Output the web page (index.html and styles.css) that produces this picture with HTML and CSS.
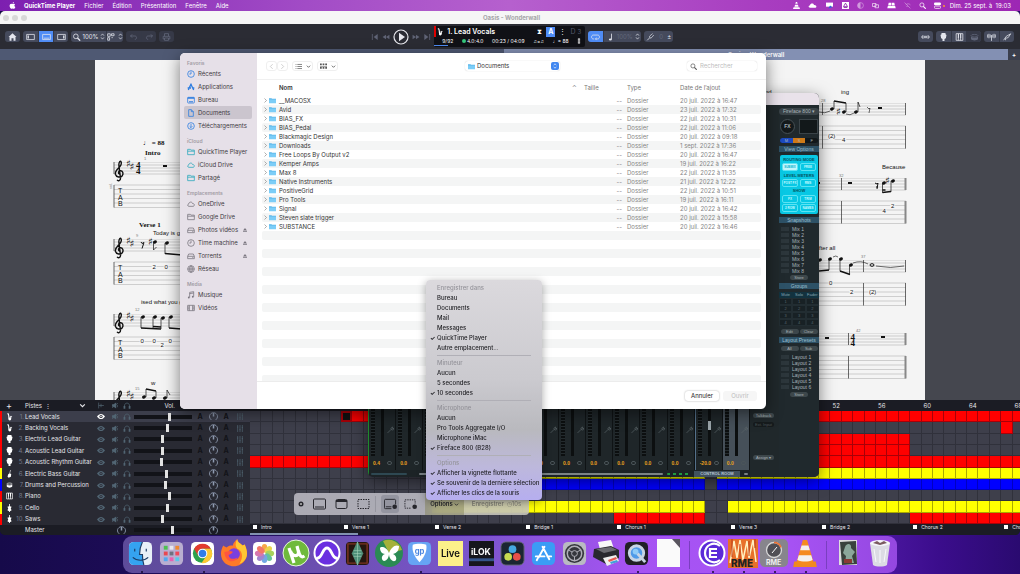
FILE: index.html
```html
<!DOCTYPE html>
<html lang="fr">
<head>
    <meta charset="UTF-8">
    <meta name="viewport" content="width=device-width, initial-scale=1.0">
    <title>Oasis - Wonderwall</title>
    <link rel="stylesheet" href="styles.css">
</head>
<body>
    <!-- Shared icons -->
    <svg class="sprite" aria-hidden="true">
        <symbol id="apple" viewBox="0 0 12 12"><path d="M8.500 0c.1 1.400-1 2.600-2.300 2.600C6 1.300 7.200.2 8.500 0zM6.200 3.300c.5 0 1.200-.5 2.100-.5.9 0 1.700.4 2.200 1.100-1.900 1.100-1.600 3.900.4 4.600-.5 1.400-1.500 3.100-2.600 3.100-.8 0-1.100-.5-2.100-.5s-1.300.5-2.100.5C2.700 11.600 1 8.700 1 6.300c0-2.200 1.500-3.500 2.900-3.500 1 0 1.700.5 2.300.5z"/></symbol>
        <symbol id="clock" viewBox="0 0 12 12"><circle cx="6" cy="6" r="5" class="ln"/><path d="M6 2.500V6H3.500" class="ln"/></symbol>
        <symbol id="apps" viewBox="0 0 12 12"><path d="M6.500 1 3.500 7M5.500 1l4.500 9.500M1 7.500h5M8 7.500h3M2.800 8.800 2 10.500" class="ln thick"/></symbol>
        <symbol id="desk" viewBox="0 0 12 12"><rect x="1" y="2" width="10" height="8.500" rx="1" class="ln"/><path d="M1 2h10v2H1zM3 8h6v1.500H3z"/></symbol>
        <symbol id="doc" viewBox="0 0 12 12"><path d="M2.500 1h4l3 3v7h-7zM6.500 1v3h3" class="ln"/></symbol>
        <symbol id="down" viewBox="0 0 12 12"><circle cx="6" cy="6" r="5" class="ln"/><path d="M6 3v5M4 6.500l2 2 2-2" class="ln"/></symbol>
        <symbol id="folder" viewBox="0 0 12 12"><path d="M1 2h4l1 1.200h5V10H1zM1 4.800h10" class="ln"/></symbol>
        <symbol id="cloud" viewBox="0 0 12 12"><path d="M3 9.500C.5 9.500.3 6.400 2.600 6 2.800 2.500 7.600 2.200 8.300 5.200c3.300-.2 3.500 4.300.7 4.300z" class="ln"/></symbol>
        <symbol id="disk" viewBox="0 0 12 12"><path d="M1 6.500 2.500 3h7L11 6.500V10H1zM1 6.500h10M8 8.300h1.500" class="ln"/></symbol>
        <symbol id="globe" viewBox="0 0 12 12"><circle cx="6" cy="6" r="5" class="ln"/><path d="M1 6h10M6 1v10M6 1C2.500 4 2.500 8 6 11M6 1c3.500 3 3.500 7 0 10" class="ln"/></symbol>
        <symbol id="music" viewBox="0 0 12 12"><path d="M4 9.500V2l6-1v7.500M4 4l6-1" class="ln"/><circle cx="2.700" cy="9.700" r="1.400"/><circle cx="8.700" cy="8.700" r="1.400"/></symbol>
        <symbol id="film" viewBox="0 0 12 12"><path d="M1 2h10v8H1zM3.500 2v8M8.500 2v8M1 4.600h2.500M1 7.300h2.500M8.500 4.600H11M8.500 7.300H11" class="ln"/></symbol>
        <symbol id="eject" viewBox="0 0 12 12"><path d="m6 2 4 5H2zM2 8.500h8V10H2z"/></symbol>
        <symbol id="bluefolder" viewBox="0 0 14 12"><path d="M0 1.500h5l1 1h8V11H0z" fill="#58b4e8"/><path d="M0 4h14v7.500H0z" fill="#7ccdf7"/></symbol>
        <symbol id="magnifier" viewBox="0 0 12 12"><circle cx="5" cy="5" r="3.500" class="ln"/><path d="m7.500 7.500 4 4" class="ln thick"/></symbol>
        <symbol id="home" viewBox="0 0 12 12"><path d="M6 .5 12 6h-1.500v5.500h-3V8h-3v3.500h-3V6H0z"/></symbol>
        <symbol id="pane-left" viewBox="0 0 14 10"><path d="M1 1h12v8H1z" class="ln"/><path d="M2.500 2.500h2v5h-2z"/></symbol>
        <symbol id="pane-bottom" viewBox="0 0 14 10"><path d="M1 1h12v8H1z" class="ln"/><path d="M2.500 6h9v1.500h-9z"/></symbol>
        <symbol id="pane-right" viewBox="0 0 14 10"><path d="M1 1h12v8H1z" class="ln"/><path d="M9.500 2.500h2v5h-2z"/></symbol>
        <symbol id="updown" viewBox="0 0 8 12"><path d="m1.500 4.500 2.500-3 2.500 3M1.500 7.500l2.500 3 2.500-3" class="ln"/></symbol>
        <symbol id="chevron" viewBox="0 0 12 12"><path d="m2 4 4 4 4-4" class="ln thick"/></symbol>
        <symbol id="layout" viewBox="0 0 14 12"><path d="M1 1h4v4H1zM7 1h4v3H7zM1 7h3v4H1zM7 7h2" class="ln"/></symbol>
        <symbol id="undo" viewBox="0 0 12 12"><path d="M4 2 1.500 4.500 4 7M1.500 4.500H8c3.500 0 3.500 5 0 5" class="ln"/></symbol>
        <symbol id="redo" viewBox="0 0 12 12"><path d="m8 2 2.500 2.500L8 7M10.500 4.500H4c-3.500 0-3.500 5 0 5" class="ln"/></symbol>
        <symbol id="print" viewBox="0 0 12 12"><path d="M3 5V1h6v4M3 9H1V5h10v4H9M3 7.500h6V11H3z" class="ln"/></symbol>
        <symbol id="prev" viewBox="0 0 12 12"><path d="M2 1.500v9" class="ln"/><path d="M10 1.500v9L4 6z"/></symbol>
        <symbol id="rew" viewBox="0 0 14 12"><path d="M7 2v8L1 6zM13 2v8L7 6z"/></symbol>
        <symbol id="play" viewBox="0 0 16 16"><circle cx="8" cy="8" r="7" class="ln"/><path d="M6 3.800v8.400L12 8z"/></symbol>
        <symbol id="loop" viewBox="0 0 14 10"><path d="M5 8H3.500C0 8 0 2 3.500 2h7C14 2 14 8 10.500 8H7M8.500 6 7 8l1.500 1.800" class="ln"/></symbol>
        <symbol id="note" viewBox="0 0 8 12"><path d="M5.500 1v8.500" class="ln"/><ellipse cx="3.800" cy="9.700" rx="2.200" ry="1.600"/></symbol>
        <symbol id="fork" viewBox="0 0 12 12"><path d="m1 11 4-4M5 7c-2-2 2-4 4-6M5 7c2 2 4-2 6-4" class="ln"/></symbol>
        <symbol id="width" viewBox="0 0 14 10"><path d="M3.500 2 1 5l2.500 3M10.500 2 13 5l-2.500 3M1 5h12M6 3v4M8 3v4" class="ln"/></symbol>
        <symbol id="guitar" viewBox="0 0 10 12"><path d="M2 0h6v2l1.500 1-1 5L6.500 9v3h-3V9l-2-1L.5 3 2 2z"/></symbol>
        <symbol id="keys" viewBox="0 0 12 12"><path d="M1 1h10v10H1zM4.300 6v5M7.700 6v5" class="ln"/><path d="M3.500 1h1.700v6H3.500zM6.900 1h1.700v6H6.900z"/></symbol>
        <symbol id="drum" viewBox="0 0 14 12"><ellipse cx="7" cy="4" rx="5.500" ry="2" class="ln"/><path d="M1.500 5.500c3 2 8 2 11 0V9c-2 3-9 3-11 0zM6 4l7-3.500"/></symbol>
        <symbol id="fan" viewBox="0 0 14 12"><path d="M1 2v5M3 1v7M5 2v5M7 3v9M9 2v5M11 1v7M13 2v5" class="ln"/></symbol>
        <symbol id="pluck" viewBox="0 0 14 12"><path d="m1 11 4-6 7-4-4 6-4 1v3" class="ln"/></symbol>
        <symbol id="sax" viewBox="0 0 10 14"><path d="M2 1c2 0 1.500 4 2 7s3.500 4 3.500-2" class="ln thick"/><path d="M1 1.500h2M6 6h3.500" class="ln"/><circle cx="5.500" cy="10.500" r="2.500"/></symbol>
        <symbol id="bass" viewBox="0 0 10 14"><path d="M7 0 6 6l2 1-.5 5-4 1.500-2-2L3 7l2-1 1-6z"/></symbol>
        <symbol id="cello" viewBox="0 0 10 14"><path d="M4.300 0h1.400v4l3 1-1.500 3 1.500 3-3 1.500V14H4.300v-1.500l-3-1.500 1.500-3-1.500-3 3-1z"/></symbol>
        <symbol id="eye" viewBox="0 0 14 10"><path d="M0 5c4-6 10-6 14 0-4 6-10 6-14 0z"/><circle cx="7" cy="5" r="2.800" fill="#2d2e38"/><circle cx="7" cy="5" r="1.300"/></symbol>
        <symbol id="mute" viewBox="0 0 12 12"><path d="M1 4h2.500L8 1v10L3.500 8H1z"/><path d="m1 10 10-8M10 5v4" class="ln"/></symbol>
        <symbol id="phones" viewBox="0 0 14 12"><path d="M2.500 10V7c0-7 9-7 9 0v3" class="ln"/><path d="M1 7h3v4.500H1zM10 7h3v4.500h-3z"/></symbol>
        <symbol id="split" viewBox="0 0 12 12"><path d="M2 1v10M2 6h9M6 3v6" class="ln"/></symbol>
        <symbol id="knob" viewBox="0 0 12 12"><path d="M3 10.500C-3 5 4 0 6 1.200 8 0 15 5 9 10.500" class="ln"/><path d="M6 1v5" class="ln thick"/></symbol>
        <symbol id="faders" viewBox="0 0 12 12"><path d="M2 0v12M6 0v12M10 0v12M1 3.500h2M5 8h2M9 4.500h2" class="ln"/></symbol>
        <symbol id="wrench" viewBox="0 0 12 12"><path d="m1 11 6-6M7 5c-1-2 1-4 3-4L9 3l1 1 2-1c0 3-2 4-5 2z" class="ln"/></symbol>
        <symbol id="clef" viewBox="0 0 12 26" overflow="visible"><path d="M5.500 12c-1.500-.6-1.500-3 .8-3.200 2.600-.1 3.400 3 2 4.900-1.600 2-6 1.700-6.800-1.200C.6 8.900 3.700 7.100 5.700 4.900 7.300 3 7.900.3 6.700-.7 5.300-1 4.700 1.700 4.900 3.700L6.500 16c.3 2.800-2.800 3.400-3.300 1.800" class="stroke heavy"/></symbol>
    </svg>

    <!-- Menu bar -->
    <header class="menubar">
        <svg class="icon"><use href="#apple"/></svg>
        <nav>
            <a href="#" class="app-name">QuickTime Player</a>
            <a href="#">Fichier</a>
            <a href="#">Édition</a>
            <a href="#">Présentation</a>
            <a href="#">Fenêtre</a>
            <a href="#">Aide</a>
        </nav>
        <div class="status">
            <svg class="icon" viewBox="0 0 12 12"><path d="M5 0h2l1 3H4zM3.500 4.500h5L9.500 8h-7zM1 9h10l1 3H0z"/></svg>
            <svg class="icon wide" viewBox="0 0 14 12"><path d="M3 10C-.5 10-.3 6 2.500 6 3.500 1.500 9 2 9.500 5c5-.5 5.500 5 1.500 5z"/></svg>
            <svg class="icon wide" viewBox="0 0 14 12"><path d="M1 1h12v7H1z"/><path d="m5 11 3-5 4 3z" fill="#2a63d8"/></svg>
            <svg class="icon" viewBox="0 0 12 12"><path d="M0 0h12v12H0z"/><path d="M6 2 2.500 8h7zM3 9.500h6" stroke="#8a2aa8" stroke-width="1.500" fill="none"/></svg>
            <svg class="icon faint" viewBox="0 0 12 12"><circle cx="6" cy="6" r="5" class="ln"/><path d="M6 1v10a5 5 0 0 1 0-10"/></svg>
            <svg class="icon" viewBox="0 0 14 12"><path d="M1 2h7v6H1zM6 4.500h7v6H6z" class="ln"/></svg>
            <svg class="icon wide" viewBox="0 0 16 12"><path d="M3 1h4.500v5H2zM8.500 1H13l1 5H8.500zM1.500 7h13l1 4H.5z"/></svg>
            <svg class="icon faint" viewBox="0 0 12 12"><path d="m1 1 10 10M3 5c3-3 6-2 8 0M4 8c1-1 2-1 3 0" class="ln"/></svg>
            <svg class="icon"><use href="#magnifier"/></svg>
            <svg class="icon" viewBox="0 0 12 12"><rect x="0" y="1" width="12" height="4.500" rx="2"/><rect x=".5" y="7" width="11" height="4" rx="2" class="ln"/></svg>
            <i class="rec-dot"></i>
            <span>Dim. 25 sept. à &nbsp;19:03</span>
        </div>
    </header>

    <!-- Guitar Pro -->
    <main class="gp">
        <div class="titlebar">
            <div class="lights"><i></i><i></i><i></i></div>
            <h1>Oasis - Wonderwall</h1>
        </div>

        <div class="toolbar">
            <div class="tools-left">
                <div class="btns"><button aria-label="Accueil"><svg><use href="#home"/></svg></button></div>
                <div class="btns">
                    <button aria-label="Palette"><svg><use href="#pane-left"/></svg></button>
                    <button class="on" aria-label="Pistes"><svg><use href="#pane-bottom"/></svg></button>
                    <button aria-label="Inspecteur"><svg><use href="#pane-right"/></svg></button>
                </div>
                <div class="btns zoom">
                    <button class="zoom-btn"><svg><use href="#magnifier"/></svg>100%<svg class="thin"><use href="#updown"/></svg></button>
                    <button aria-label="Affichage"><svg><use href="#layout"/></svg><svg class="thin"><use href="#updown"/></svg></button>
                </div>
                <div class="btns dim">
                    <button aria-label="Annuler"><svg><use href="#undo"/></svg></button>
                    <button aria-label="Rétablir"><svg><use href="#redo"/></svg></button>
                </div>
                <div class="btns dim"><button aria-label="Imprimer"><svg><use href="#print"/></svg></button></div>
            </div>

            <div class="transport">
                <button aria-label="Début"><svg><use href="#prev"/></svg></button>
                <button aria-label="Reculer"><svg><use href="#rew"/></svg></button>
                <button class="play" aria-label="Lecture"><svg><use href="#play"/></svg></button>
                <button class="flip" aria-label="Avancer"><svg><use href="#rew"/></svg></button>
                <button class="flip" aria-label="Fin"><svg><use href="#prev"/></svg></button>
            </div>

            <div class="lcd">
                <div class="lcd-top">
                    <svg><use href="#sax"/></svg>
                    <strong>1. Lead Vocals</strong>
                    <span class="lcd-icon">⧗</span>
                    <span class="metro">A</span>
                    <span class="lcd-icon">⋮</span>
                    <span class="chord">D <small>3</small></span>
                </div>
                <div class="lcd-bottom">
                    <span>9/92</span>
                    <span class="beat"><i></i>4.0:4.0</span>
                    <span>00:23 / 04:09</span>
                    <span class="swing">♫=♫</span>
                    <span>♩= 88</span>
                    <svg viewBox="0 0 6 10"><path d="M3 0v10M1 2h4M1 5h4M1 8h4" class="ln"/></svg>
                </div>
                <div class="progress"></div>
            </div>

            <div class="btns speed">
                <button class="on" aria-label="Boucle"><svg><use href="#loop"/></svg></button>
                <button class="speed-btn"><svg><use href="#note"/></svg><em>100%</em><svg class="thin"><use href="#updown"/></svg></button>
            </div>
            <div class="btns"><button class="tune-btn"><svg><use href="#fork"/></svg><em>0</em>±</button></div>

            <div class="tools-right">
                <div class="btns"><button aria-label="Largeur"><svg><use href="#width"/></svg></button></div>
                <div class="btns">
                    <button aria-label="Manche"><svg><use href="#guitar"/></svg></button>
                    <button aria-label="Clavier"><svg><use href="#keys"/></svg></button>
                    <button class="off" aria-label="Batterie"><svg><use href="#drum"/></svg></button>
                </div>
                <div class="btns">
                    <button aria-label="Accords"><svg><use href="#fan"/></svg></button>
                    <button aria-label="Gammes"><svg><use href="#pluck"/></svg></button>
                </div>
            </div>
        </div>

        <div class="tabs">
            <div class="tab"></div>
            <div class="tab current">Oasis - Wonderwall</div>
            <button aria-label="Nouvel onglet">+</button>
        </div>

        <section class="canvas">
            <svg class="score" viewBox="95 60 830 340" preserveAspectRatio="xMidYMin slice">
                <defs>
                    <g id="staff"><path d="M0 0h791M0 3h791M0 6h791M0 9h791M0 12h791M0 23h791M0 27.500h791M0 32h791M0 36.500h791M0 41h791M0 45.500h791" class="line"/></g>
                    <g id="opening">
                        <path d="M0 0v12M0 23v22.500" class="bar"/>
                        <use href="#clef" width="12" height="26"/>
                        <text x="12" y="5" class="acc">♯</text><text x="15.500" y="8" class="acc">♯</text>
                        <text x="4" y="31" class="tab-letter">T</text><text x="4" y="37.500" class="tab-letter">A</text><text x="4" y="44" class="tab-letter">B</text>
                    </g>
                    <g id="up"><ellipse rx="2" ry="1.500" transform="rotate(-20)"/></g>
                </defs>
                <g id="staves"></g>

                <text x="143" y="145" class="bold">♩ = 88</text>
                <text x="145" y="155" class="bold">Intro</text>
                <text x="-189" y="112" class="small" transform="rotate(-90)">sol.</text>
                <text x="136" y="167.500" class="time">4</text><text x="136" y="174" class="time">4</text>
                <text x="144" y="160" class="num">1</text>
                <rect x="163" y="165" width="4" height="2"/>

                <text x="139" y="227" class="bold">Verse 1</text>
                <text x="153" y="235" class="lyric">Today is gonna be</text>
                <text x="136" y="237" class="num">9</text>
                <path d="m141 242 1 1.500 2-1-2 6" class="stroke"/>
                <text x="148" y="245" class="acc">♯</text>
                <use href="#up" x="155" y="242"/><path d="M153.500 242v8l3-3" class="stem"/>
                <use href="#up" x="167" y="243"/><path d="M165 243v11" class="stem"/><path d="M165 253.500l17 1.500" class="beam"/>
                <text x="152.500" y="269" class="fret">2</text><text x="164.500" y="269" class="fret">0</text>

                <text x="141" y="304" class="lyric">ised what you gotta do</text>
                <text x="135" y="311" class="num">12</text>
                <use href="#up" x="143" y="317"/><use href="#up" x="155" y="317"/><use href="#up" x="163" y="318"/><use href="#up" x="171" y="317"/>
                <path d="M141 317v11M153 317v11M161 318v11M169 317v11" class="stem"/>
                <path d="M141 328l20 1M153 326.500l8 .5M169 328l13 1" class="beam"/>
                <text x="140.500" y="343" class="fret">0</text><text x="152.500" y="343" class="fret">0</text><text x="160.500" y="347" class="fret">2</text><text x="168.500" y="343" class="fret">0</text>

                <text x="151" y="385" class="lyric">w</text><text x="135" y="390" class="num">15</text>
                <use href="#up" x="144" y="397"/><use href="#up" x="154" y="398"/><use href="#up" x="165" y="398"/>
                <path d="M146 397v-8M156 398v-7M167 398v-8l3 5" class="stem"/><path d="m146 389 10 2" class="beam"/>

                <text x="765" y="94" class="lyric">nd</text><text x="841" y="94" class="lyric">ing</text><text x="821" y="102" class="num">28</text>
                <path d="M822.500 103v12M822.500 126v22.500" class="bar"/>
                <use href="#up" x="832" y="109"/><use href="#up" x="844" y="112"/><use href="#up" x="856" y="112"/>
                <path d="M834 109v-8M846 112v-9M858 112v-10l2 5" class="stem"/><path d="m834 101 12 2" class="beam"/>
                <path d="M819 112q6 2 11-1M846 114q4 2 8-1M867 107l2 2 1-1-1 5" class="stroke thin"/>
                <text x="836" y="115" class="acc">♯</text><rect x="878" y="107" width="4" height="2"/>
                <text x="828" y="138" class="fret">(2)</text><text x="842" y="142" class="fret">4</text>

                <text x="882" y="169" class="lyric">Because</text><text x="839" y="177" class="num">32</text>
                <path d="M841.500 178v12M841.500 201v22.500" class="bar"/>
                <rect x="848" y="182" width="4" height="2"/><rect x="818" y="182" width="2" height="2"/>
                <path d="m875 183 2 1 1-1-1 6M876 187h2" class="stroke"/>
                <text x="885" y="184" class="acc">♯</text>
                <use href="#up" x="884" y="183"/><use href="#up" x="893" y="181"/><path d="M882.500 183v10M891 181v11" class="stem"/><path d="M882.500 192.500l8.500-1M882.500 190l3 0" class="beam"/>
                <text x="882.500" y="213" class="fret">4</text><text x="891" y="208" class="fret">2</text>

                <text x="819" y="250" class="lyric">fter all</text><text x="861" y="258" class="num">37</text>
                <path d="M863.500 260v12M863.500 283v22.500" class="bar"/>
                <use href="#up" x="820" y="260"/><use href="#up" x="830" y="259"/><use href="#up" x="841" y="259"/><use href="#up" x="851" y="265"/>
                <path d="M829 259v11M840 259v12M849.500 265v9" class="stem"/><path d="M819 271l10-1M840 271l10 3.500" class="beam"/>
                <path d="M833 257q3-2 5 0M853 263q8-3 15 1M876 266q15 3 28 0" class="stroke thin"/>
                <ellipse cx="872" cy="265" rx="2" ry="1.300" class="stroke"/>
                <text x="829" y="284.500" class="fret">0</text><text x="850" y="293.500" class="fret">2</text><text x="869" y="293.500" class="fret">(2)</text>

                <text x="856" y="332" class="num">42</text>
                <path d="M848.500 333v12M848.500 356v22.500" class="bar"/>
                <text x="850.500" y="339.500" class="time">4</text><text x="850.500" y="346" class="time">4</text>
                <rect x="825" y="337" width="4" height="2"/><rect x="881" y="336" width="4" height="2"/>
            </svg>
        </section>

        <section class="tracks">
            <div class="panel">
                <div class="track head">
                    <span></span><b class="plus">+</b><span></span>
                    <span class="list-title">Pistes &nbsp;⋮ <svg><use href="#chevron"/></svg></span>
                    <svg class="ic"><use href="#split"/></svg><svg class="ic"><use href="#mute"/></svg><svg class="ic"><use href="#phones"/></svg>
                    <span class="vol-title">Vol.</span>
                </div>
                <div class="track-list" id="trackList"></div>
                <div class="track master">
                    <span></span><span></span><span></span>
                    <span>Master</span>
                    <svg class="ic pan"><use href="#knob"/></svg>
                    <input type="range" value="68" aria-label="Volume Master">
                    <span></span><svg class="ic pan-end"><use href="#knob"/></svg>
                </div>
            </div>
            <div class="timeline">
                <div class="bars ruler" id="ruler"></div>
                <div class="lanes" id="lanes"></div>
                <div class="bars markers" id="markers"></div>
                <div class="scroll"></div>
            </div>
        </section>
    </main>

    <!-- TotalMix -->
    <section class="mixer">
        <div class="mixer-title"></div>
        <div class="mixer-body">
            <div class="mixer-main">
                <div class="channels" id="channels"></div>
                <div class="mixer-foot"><i class="foot-blue"></i><i class="foot-bar"></i><i class="leds"></i><b>CONTROL ROOM</b><i class="foot-short"></i></div>
            </div>
            <div class="mixer-side">
                <button>Talkback</button>
                <button class="dark">Ext. Input</button>
                <button class="assign">Assign ▾</button>
            </div>
            <aside class="mixer-panel">
                <div class="device">Fireface 800 ▾</div>
                <div class="fx"><b>FX</b><i></i></div>
                <div class="msf"><span class="m">M</span><span class="s">S</span><span>F</span></div>
                <h3>View Options</h3>
                <div class="view">
                    <b>ROUTING MODE</b>
                    <div><span class="lit">SUBMIX</span><span>FREE</span></div>
                    <b>LEVEL METERS</b>
                    <div><span>POST FX</span><span>RMS</span></div>
                    <b>SHOW</b>
                    <div><span>FX</span><span>TRIM</span></div>
                    <div><span>2 ROW</span><span>NAMES</span></div>
                </div>
                <h3>Snapshots</h3>
                <ul class="snapshots">
                    <li>Mix 1</li><li>Mix 2</li><li>Mix 3</li><li>Mix 4</li><li>Mix 5</li><li>Mix 6</li><li>Mix 7</li><li>Mix 8</li>
                </ul>
                <div class="pair"><button>Store</button></div>
                <h3>Groups</h3>
                <div class="groups">
                    <b>Mute</b><b>Solo</b><b>Fader</b>
                    <i>1</i><i>1</i><i>1</i><i>2</i><i>2</i><i>2</i><i>3</i><i>3</i><i>3</i><i>4</i><i>4</i><i>4</i>
                </div>
                <div class="pair"><button>Edit</button><button>Clear</button></div>
                <h3>Layout Presets</h3>
                <div class="pair"><button>All</button><button>Sub</button></div>
                <ul class="layouts">
                    <li>Layout 1</li><li>Layout 2</li><li>Layout 3</li><li>Layout 4</li><li>Layout 5</li><li>Layout 6</li>
                </ul>
                <div class="pair"><button>Store</button></div>
            </aside>
        </div>
    </section>

    <!-- Open dialog -->
    <section class="dialog" role="dialog" aria-label="Ouvrir">
        <nav class="sidebar">
            <h2>Favoris</h2>
            <a href="#" class="blue"><svg><use href="#clock"/></svg>Récents</a>
            <a href="#" class="blue"><svg><use href="#apps"/></svg>Applications</a>
            <a href="#" class="blue"><svg><use href="#desk"/></svg>Bureau</a>
            <a href="#" class="blue selected"><svg><use href="#doc"/></svg>Documents</a>
            <a href="#" class="blue"><svg><use href="#down"/></svg>Téléchargements</a>
            <h2>iCloud</h2>
            <a href="#" class="teal"><svg><use href="#folder"/></svg>QuickTime Player</a>
            <a href="#" class="teal"><svg><use href="#cloud"/></svg>iCloud Drive</a>
            <a href="#" class="teal"><svg><use href="#folder"/></svg>Partagé</a>
            <h2>Emplacements</h2>
            <a href="#"><svg><use href="#cloud"/></svg>OneDrive</a>
            <a href="#"><svg><use href="#folder"/></svg>Google Drive</a>
            <a href="#"><svg><use href="#disk"/></svg>Photos vidéos<svg class="eject"><use href="#eject"/></svg></a>
            <a href="#"><svg><use href="#clock"/></svg>Time machine<svg class="eject"><use href="#eject"/></svg></a>
            <a href="#"><svg><use href="#disk"/></svg>Torrents<svg class="eject"><use href="#eject"/></svg></a>
            <a href="#"><svg><use href="#globe"/></svg>Réseau</a>
            <h2>Média</h2>
            <a href="#"><svg><use href="#music"/></svg>Musique</a>
            <a href="#"><svg><use href="#film"/></svg>Vidéos</a>
        </nav>
        <div class="browser">
            <div class="browser-bar">
                <button aria-label="Précédent" class="nav-btn"><svg viewBox="0 0 8 12"><path d="M6 2 2 6l4 4" class="ln"/></svg></button>
                <button aria-label="Suivant" class="nav-btn"><svg viewBox="0 0 8 12"><path d="m2 2 4 4-4 4" class="ln"/></svg></button>
                <button aria-label="Présentation par liste" class="view-btn"><svg viewBox="0 0 12 12"><path d="M4 2.500h8M4 6h8M4 9.500h8M1 2.500h1.500M1 6h1.500M1 9.500h1.500" class="ln"/></svg><svg class="arrow"><use href="#chevron"/></svg></button>
                <button aria-label="Grouper" class="view-btn"><svg viewBox="0 0 12 12"><path d="M0 1h3v3H0zM4.500 1h3v3h-3zM9 1h3v3H9zM0 7h3v3H0zM4.500 7h3v3h-3zM9 7h3v3H9zM0 5h12v1H0z"/></svg><svg class="arrow"><use href="#chevron"/></svg></button>
                <label class="place">
                    <svg><use href="#bluefolder"/></svg>
                    <select aria-label="Emplacement"><option>Documents</option></select>
                    <span class="stepper"><svg><use href="#updown"/></svg></span>
                </label>
                <label class="search"><svg><use href="#magnifier"/></svg><input type="search" placeholder="Rechercher" aria-label="Rechercher"></label>
            </div>
            <div class="listing">
                <table>
                    <thead><tr><th class="name">Nom</th><th class="caret">⌃</th><th class="size-head">Taille</th><th class="type">Type</th><th>Date de l’ajout</th></tr></thead>
                    <tbody id="files"></tbody>
                </table>
            </div>
            <div class="browser-foot">
                <button>Annuler</button>
                <button disabled>Ouvrir</button>
            </div>
        </div>
    </section>

    <!-- Screen capture bar -->
    <section class="capture">
        <button aria-label="Fermer" class="cap-close"><svg viewBox="0 0 12 12"><circle cx="6" cy="6" r="5"/><path d="m4 4 4 4M8 4 4 8" stroke="#bbb" stroke-width="1.500"/></svg></button>
        <button aria-label="Écran entier"><svg viewBox="0 0 26 24"><rect x="1" y="2" width="24" height="20" rx="2" class="ln"/><path d="M4 17h18v2H4z"/></svg></button>
        <button aria-label="Fenêtre"><svg viewBox="0 0 26 24"><rect x="2" y="3" width="22" height="18" rx="3" class="ln"/><path d="M2 4h22v4H2z"/></svg></button>
        <button aria-label="Portion"><svg viewBox="0 0 26 24"><path d="M2 3h22v18H2z" class="ln dash"/></svg></button>
        <i class="cap-sep"></i>
        <button aria-label="Enregistrer l’écran" class="picked"><svg viewBox="0 0 28 24"><path d="M16 22H3c-2 0-2-1-2-2V4c0-1 1-2 2-2h20c1 0 2 1 2 2v9M4 18h12" class="ln"/><circle cx="23" cy="18" r="5"/></svg></button>
        <button aria-label="Enregistrer une portion"><svg viewBox="0 0 28 24"><path d="M14 21H2V3h22v9" class="ln dash"/><circle cx="23" cy="18" r="5"/></svg></button>
        <button class="cap-options">Options <svg><use href="#chevron"/></svg></button>
        <button class="cap-record">Enregistrer <small>◷10s</small></button>
    </section>

    <!-- Options menu -->
    <div class="menu" role="menu">
        <h2>Enregistrer dans</h2>
        <button role="menuitem">Bureau</button>
        <button role="menuitem">Documents</button>
        <button role="menuitem">Mail</button>
        <button role="menuitem">Messages</button>
        <button role="menuitem" class="checked">QuickTime Player</button>
        <button role="menuitem">Autre emplacement...</button>
        <hr>
        <h2>Minuteur</h2>
        <button role="menuitem">Aucun</button>
        <button role="menuitem">5 secondes</button>
        <button role="menuitem" class="checked">10 secondes</button>
        <hr>
        <h2>Microphone</h2>
        <button role="menuitem">Aucun</button>
        <button role="menuitem">Pro Tools Aggregate I/O</button>
        <button role="menuitem">Microphone iMac</button>
        <button role="menuitem" class="checked">Fireface 800 (B28)</button>
        <hr>
        <h2>Options</h2>
        <button role="menuitem" class="checked">Afficher la vignette flottante</button>
        <button role="menuitem" class="checked">Se souvenir de la dernière sélection</button>
        <button role="menuitem" class="checked">Afficher les clics de la souris</button>
    </div>

    <!-- Dock -->
    <footer class="dock">
        <a href="#" class="running" aria-label="Finder"><svg viewBox="0 0 26 26"><rect x="1" y="1" width="24" height="24" rx="5" fill="#e8f0f8"/><path d="M6 1h9c-2 4-3 8-3 13h3c0 4 .5 8 1.500 11H6a5 5 0 0 1-5-5V6a5 5 0 0 1 5-5z" fill="#35a3f0"/><path d="M7 8v3M19 8v3M5 17c4 4 12 4 16 0M15 1c-2 4-3 8-3 13h3c0 4 .5 8 1.500 11" stroke="#1c3c66" stroke-width="1.200" fill="none"/></svg></a>
        <a href="#" aria-label="Launchpad"><svg viewBox="0 0 26 26"><rect x="1" y="1" width="24" height="24" rx="5" fill="#b9aed0"/><path d="M5 5h4v4H5z" fill="#4cc050"/><path d="M11 5h4v4h-4z" fill="#e8e8f0"/><path d="M17 5h4v4h-4z" fill="#f08a30"/><path d="M5 11h4v4H5z" fill="#e84850"/><path d="M11 11h4v4h-4z" fill="#707080"/><path d="M17 11h4v4h-4z" fill="#f04858"/><path d="M5 17h4v4H5z" fill="#50a8f0"/><path d="M11 17h4v4h-4z" fill="#e860b0"/><path d="M17 17h4v4h-4z" fill="#58c8e8"/></svg></a>
        <a href="#" class="running" aria-label="Chrome"><svg viewBox="0 0 26 26"><rect x="1" y="1" width="24" height="24" rx="5" fill="#fff"/><circle cx="13" cy="13" r="10" fill="#2ba24c"/><path d="M4.300 8A10 10 0 0 1 21.700 8H13a5 5 0 0 0-4.500 7.500z" fill="#e33b2e"/><path d="M21.700 8A10 10 0 0 1 12 23l5-7.500A5 5 0 0 0 13 8z" fill="#fcc934"/><circle cx="13" cy="13" r="5" fill="#fff"/><circle cx="13" cy="13" r="3.900" fill="#2f7de8"/></svg></a>
        <a href="#" class="big" aria-label="Firefox"><svg viewBox="0 0 26 26"><path d="M3 6c1 1 2 1 3 2 2-2 3-2 6-2 0-2 2-4 4-6 0 3 3 4 5 6l2-1c2 5 3 9 1 13-4 9-17 10-22 1C0 14 1 10 3 6z" fill="#ff7a28"/><path d="M16 0c0 3 3 4 5 6l2-1c2 5 3 9 1 13-1 2-3 4-6 5 4-6 3-12-2-14-2-2-2-5 0-9z" fill="#ffc733"/><circle cx="13" cy="14" r="5.500" fill="#7a3fe0"/><path d="M4 12c3 0 5-2 8 0-2 3-5 2-4 4 1 3 6 3 9 1-4 6-12 5-13-5z" fill="#ff5540"/></svg></a>
        <a href="#" aria-label="Photos"><svg viewBox="0 0 26 26"><rect x="1" y="1" width="24" height="24" rx="5" fill="#fff"/><g opacity=".85"><ellipse cx="13" cy="7.500" rx="3" ry="4.500" fill="#f79a2a"/><ellipse cx="13" cy="7.500" rx="3" ry="4.500" fill="#e8d030" transform="rotate(45 13 13)"/><ellipse cx="13" cy="7.500" rx="3" ry="4.500" fill="#9acb40" transform="rotate(90 13 13)"/><ellipse cx="13" cy="7.500" rx="3" ry="4.500" fill="#4bb98a" transform="rotate(135 13 13)"/><ellipse cx="13" cy="7.500" rx="3" ry="4.500" fill="#5a9ae0" transform="rotate(180 13 13)"/><ellipse cx="13" cy="7.500" rx="3" ry="4.500" fill="#9070c8" transform="rotate(225 13 13)"/><ellipse cx="13" cy="7.500" rx="3" ry="4.500" fill="#d060a0" transform="rotate(270 13 13)"/><ellipse cx="13" cy="7.500" rx="3" ry="4.500" fill="#f06050" transform="rotate(315 13 13)"/></g></svg></a>
        <a href="#" class="big" aria-label="uTorrent"><svg viewBox="0 0 28 28"><circle cx="14" cy="14" r="13" fill="#6fba3c" stroke="#e8f4e0"/><path d="m7 9 5 15M8.500 12c2 6 8 6 8 1L15 7M16.500 12c1 5 3 7 6 5" fill="none" stroke="#fff" stroke-width="3.200"/></svg></a>
        <a href="#" class="big" aria-label="Pro Tools"><svg viewBox="0 0 28 28"><circle cx="14" cy="14" r="12.500" fill="#6a2fe0" stroke="#fff" stroke-width="2"/><path d="M3 19c6 2 6-10 11-10s5 12 11 10" fill="none" stroke="#fff" stroke-width="2.800"/></svg></a>
        <a href="#" aria-label="BIAS"><svg viewBox="0 0 26 26"><rect x="1" y="1" width="24" height="24" rx="4" fill="#241610"/><path d="M3 3h20v20H3z" fill="none" stroke="#7a3520" stroke-width="1.500"/><path d="m13 0 6 13-6 13-6-13z" fill="#4f8f78"/><path d="M9 10h8M9 13h8M9 16h8M13 1v24" stroke="#a5d4b8" stroke-width=".6"/></svg></a>
        <a href="#" class="big" aria-label="Papillon"><svg viewBox="0 0 28 28"><circle cx="14" cy="14" r="14" fill="#2b8a54"/><path d="M8 2a14 14 0 0 1 19 9L14 14z" fill="#a5b13a"/><path d="M14 14C12 8 6 7 5 9c0 3 2 6 5 6-4 1-4 6-1 7 3 0 5-4 5-7 0 4 3 8 6 7 2-1 2-5-2-7 4-1 6-4 6-8-4-2-8 2-10 7z" fill="#fff"/></svg></a>
        <a href="#" class="running" aria-label="Guitar Pro"><svg viewBox="0 0 26 26"><rect x="1" y="1" width="24" height="24" rx="5" fill="#66a4f4"/><path d="M6 4c4-1.500 10-1.500 14 0 1.500 7-3 14-7 18C9 18 4.500 11 6 4z" fill="#fff"/><text x="8" y="13" font-size="8" font-weight="700" fill="#4a86e0">gp</text></svg></a>
        <a href="#" aria-label="Live"><svg viewBox="0 0 26 26"><path d="M0 0h26v26H0z" fill="#fcf08a"/><text x="3" y="17" font-size="10" font-weight="600" fill="#111">Live</text></svg></a>
        <a href="#" aria-label="iLok"><svg viewBox="0 0 26 26"><path d="M0 0h26v26H0z" fill="#16161c"/><path d="M0 18h26v3H0z" fill="#35548a"/><text x="2" y="15" font-size="9" font-weight="700" fill="#fff">iLOK</text></svg></a>
        <a href="#" aria-label="DaVinci Resolve"><svg viewBox="0 0 26 26"><rect x="1" y="1" width="24" height="24" rx="5" fill="#1b2632" stroke="#667" /><circle cx="13" cy="8.500" r="4" fill="#45a8e0"/><circle cx="8.500" cy="16.500" r="4" fill="#c8dc50"/><circle cx="17.500" cy="16.500" r="4" fill="#e85048"/></svg></a>
        <a href="#" aria-label="App Store"><svg viewBox="0 0 26 26"><rect x="1" y="1" width="24" height="24" rx="5" fill="#3a9cf5"/><path d="m14 6-6 11M12 6l7 13M5 16h9M17 16h4M7 18l-1 2" stroke="#fff" stroke-width="2" stroke-linecap="round"/></svg></a>
        <a href="#" aria-label="Préférences Système"><svg viewBox="0 0 26 26"><rect x="1" y="1" width="24" height="24" rx="5" fill="#b9bac2"/><circle cx="13" cy="13" r="10" fill="#34363c"/><circle cx="13" cy="13" r="7.500" fill="none" stroke="#b0b0b8" stroke-width="1.500"/><circle cx="13" cy="13" r="3" fill="none" stroke="#b0b0b8"/><path d="M13 16v5M10.500 11.500 6 9M15.500 11.500 20 9" stroke="#b0b0b8"/></svg></a>
        <a href="#" class="big" aria-label="Imprimante"><svg viewBox="0 0 28 28"><path d="m6 3 13-2 3 9-13 4z" fill="#f8f8f8"/><path d="m2 10 17-3 8 4v8l-13 6L1 18z" fill="#28282e"/><path d="m4 10 15-2 6 3-13 3z" fill="#6a6a70"/><path d="m11 19 13-3 3 6-12 5z" fill="#eee"/><path d="m16 21 8-3 1 2-8 3z" fill="#e85a50"/><path d="m18 23 7-2 1 2-7 2z" fill="#40a0d8"/></svg></a>
        <a href="#" class="running" aria-label="QuickTime Player"><svg viewBox="0 0 26 26"><rect x="1" y="1" width="24" height="24" rx="5" fill="#202026"/><circle cx="13" cy="12.500" r="7.500" fill="#4f9ae8" stroke="#c8d4e4" stroke-width="3"/><path d="m14 13 8 9" stroke="#c8d4e4" stroke-width="3"/><circle cx="12" cy="11" r="3" fill="#8fcbf8"/></svg></a>
        <a href="#" class="big" aria-label="LibreOffice"><svg viewBox="0 0 28 28"><path d="M3 0h17l6 7v21H3z" fill="#fafafa"/><path d="M18 0h8v9z" fill="#58545e"/></svg></a>
        <i class="dock-sep"></i>
        <a href="#" class="running big" aria-label="Eucon"><svg viewBox="0 0 28 28"><circle cx="14" cy="14" r="12.500" fill="#5b2ad8" stroke="#fff" stroke-width="2"/><path d="M22 7c-6-5-15-1-15 7s9 12 15 7M19 10h-7v8h7M12 14h7" fill="none" stroke="#fff" stroke-width="2.200"/></svg></a>
        <a href="#" class="running full" aria-label="RME Fireface"><svg viewBox="0 0 30 29"><path d="M0 0h30v29H0z" fill="#e8702a"/><path d="m2 24 4-22 3 17 3-18 3 20 4-19 2 17 4-18 3 22" fill="none" stroke="#fff0c0" stroke-width="1.500"/><path d="M4 0v18M12 5v19M21 2v15M27 0v9" stroke="#b93a15"/><text x="3" y="28" font-size="10" font-weight="800">RME</text></svg></a>
        <a href="#" class="running big" aria-label="TotalMix"><svg viewBox="0 0 28 28"><rect width="28" height="28" rx="5" fill="#87858c"/><circle cx="14" cy="11" r="7.500" fill="#504f56" stroke="#d8d8d8" stroke-width="1.300"/><path d="M14 3.500a7.500 7.500 0 0 1 7 5" fill="none" stroke="#f07030" stroke-width="1.500"/><path d="m12 14 5-6" stroke="#fff"/><text x="6" y="26" font-size="7" font-weight="700" fill="#eee">RME</text></svg></a>
        <a href="#" class="running big" aria-label="VLC"><svg viewBox="0 0 26 26"><path d="M3 21 2 26h22l-1-5z" fill="#f08a20"/><path d="M11 1h4l6 21c-4 3-12 3-16 0z" fill="#f58a1f"/><path d="M9.800 6h6.400l1.300 4.500h-9zM7.200 15h11.600l1.300 4.500c-4 2-10 2-14.200 0z" fill="#f4f0ee"/></svg></a>
        <i class="dock-sep"></i>
        <a href="#" class="big" aria-label="Image"><svg viewBox="0 0 28 28"><path d="M4 1h18v25H4z" fill="#ddd"/><path d="m5 3 16-1 1 23-15 1z" fill="#39423c"/><path d="M10 8c2-5 7-3 6 1l4 4-3 4 2 7h-9l1-7-3-3z" fill="#8ba79a"/><path d="M9 20h8v4H9z" fill="#8a3a35"/></svg></a>
        <a href="#" class="big" aria-label="Corbeille"><svg viewBox="0 0 28 28"><path d="M4 4h20l-3 22c-3 2-11 2-14 0z" fill="#dcdce4"/><ellipse cx="14" cy="4" rx="10" ry="3" fill="#f5f5fa"/><path d="m7 4 4-2 3 2 4-2 3 2-7 2z" fill="#7a5a60"/><path d="m8 10 2 13M14 11v13M20 10l-2 13" stroke="#f8f8fc"/></svg></a>
    </footer>

    <script src="script.js"></script>
</body>
</html>
```
FILE: styles.css
```css
* {
    box-sizing: border-box;
}

body {
    margin: 0;
    height: 100vh;
    overflow: hidden;
    display: flex;
    flex-direction: column;
    font-family: Inter, "Liberation Sans", sans-serif;
    font-size: 6px;
    line-height: 8px;
    color: #222;
    background: linear-gradient(90deg, #160a4a 0%, #2a1170 40%, #7a32d8 70%, #3b0d8c 92%, #2a0a70 100%);
}

h1, h2, h3, ul {
    margin: 0;
    padding: 0;
    font-size: inherit;
    list-style: none;
}

a {
    color: inherit;
    text-decoration: none;
}

button, input, select {
    margin: 0;
    padding: 0;
    border: 0;
    background: none;
    font: inherit;
    color: inherit;
}

svg {
    fill: currentColor;
    flex: none;
}

.sprite {
    position: absolute;
    width: 0;
    height: 0;
}

.ln {
    fill: none;
    stroke: currentColor;
    stroke-width: 1.2px;
}

.thick {
    stroke-width: 2px;
}

/* Menu bar */
.menubar {
    flex: none;
    display: flex;
    align-items: center;
    height: 11px;
    padding: 0 9px;
    color: #fff;
    background: linear-gradient(90deg, #7d1fb0, #a24cc6 30%, #b660ce 50%, #a83dc0 75%, #9d27b4);
}

.menubar .icon {
    width: 7px;
    height: 7px;
}

.menubar .icon.wide {
    width: 9px;
}

.menubar .faint {
    opacity: 0.5;
}

.menubar nav {
    display: flex;
    gap: 9px;
    margin-left: 8px;
}

.app-name {
    font-weight: 700;
}

.status {
    display: flex;
    align-items: center;
    gap: 8px;
    margin-left: auto;
}

.rec-dot {
    width: 2px;
    height: 2px;
    margin: 0 -3px 0 -6px;
    border-radius: 50%;
    background: #ff9a30;
}

/* Guitar Pro window */
.gp {
    flex: 1;
    min-height: 0;
    display: flex;
    flex-direction: column;
    margin-bottom: 39px;
    border-radius: 5px;
    overflow: hidden;
    background: #1c1d25;
}

.titlebar {
    flex: none;
    display: grid;
    grid-template-columns: 1fr auto 1fr;
    align-items: center;
    height: 13px;
    padding-left: 3px;
    background: #f6f6f6;
}

.titlebar h1 {
    color: #a5a5a8;
    font-weight: 700;
}

.lights {
    display: flex;
    gap: 3px;
}

.lights i {
    width: 6px;
    height: 6px;
    border-radius: 50%;
    background: #d8d8d8;
}

.toolbar {
    flex: none;
    display: flex;
    align-items: center;
    gap: 3px;
    height: 25px;
    padding: 0 6px 0 5px;
    color: #e4e6ee;
    background: #2b2c34;
}

.tools-left {
    flex: 0 0 36%;
    display: flex;
    gap: 3px;
}

.tools-right {
    display: flex;
    gap: 3px;
    margin-left: auto;
}

.btns {
    display: flex;
    height: 11px;
    border-radius: 3px;
    overflow: hidden;
    background: #454a5c;
}

.btns button {
    display: flex;
    align-items: center;
    justify-content: center;
    gap: 2px;
    min-width: 15px;
}

.btns button + button {
    border-left: 1px solid #353947;
}

.btns svg {
    width: 9px;
    height: 8px;
}

.btns .thin {
    width: 5px;
    height: 7px;
}

.btns .on {
    background: #4f8cf5;
}

.btns.dim {
    color: #62677a;
    background: #363947;
}

.btns .off {
    color: #62677a;
    background: #363947;
}

.btns .zoom-btn {
    width: 35px;
}

.btns .speed-btn {
    width: 38px;
}

.btns .tune-btn {
    width: 29px;
    gap: 4px;
}

.btns em {
    color: #62677a;
    font-style: normal;
}

.transport {
    display: flex;
    align-items: center;
    gap: 3px;
    width: 60px;
    color: #5f6375;
}

.transport button {
    display: flex;
}

.transport svg {
    width: 8px;
    height: 8px;
}

.transport .play {
    color: #e8e8ee;
}

.transport .play svg {
    width: 16px;
    height: 16px;
}

.flip {
    transform: scaleX(-1);
}

.lcd {
    width: 151px;
    height: 21px;
    border-radius: 2px;
    color: #fff;
    background: #101116;
}

.lcd-top {
    display: flex;
    align-items: center;
    gap: 4px;
    height: 11px;
    padding-right: 4px;
    border-left: 2px solid #e00000;
    font-size: 7px;
}

.lcd-top svg {
    width: 6px;
    height: 8px;
    margin-left: 1px;
}

.lcd-top strong {
    margin-right: auto;
    font-weight: 600;
}

.metro {
    width: 9px;
    height: 10px;
    line-height: 10px;
    text-align: center;
    font-weight: 700;
    background: #4f8cf5;
}

.chord {
    color: #555a6c;
}

.chord small {
    font-size: 6px;
}

.lcd-bottom {
    display: flex;
    align-items: center;
    justify-content: space-between;
    height: 8px;
    padding: 0 4px 0 8px;
    font-size: 5px;
}

.lcd-bottom svg {
    width: 4px;
    height: 6px;
}

.beat i {
    display: inline-block;
    width: 4px;
    height: 4px;
    margin-right: 1px;
    border-radius: 50%;
    background: #35c77a;
}

.progress {
    width: 14px;
    height: 1px;
    background: #4f8cf5;
}

.tabs {
    flex: none;
    display: flex;
    height: 11px;
    line-height: 11px;
    color: #fff;
    background: #3b3f4d;
}

.tab {
    flex: 1;
    background: #4f5973;
}

.tab.current {
    text-align: center;
    font-weight: 600;
    background: #8390b3;
}

.tabs button {
    width: 12px;
    font-weight: 700;
}

.canvas {
    flex: 1;
    min-height: 0;
    padding: 0 95px;
    background: #45474f;
}

.score {
    display: block;
    width: 100%;
    height: 100%;
    background: #f4f4f4;
    fill: #111;
}

.score text {
    font-family: "Liberation Sans", "DejaVu Sans", sans-serif;
    font-size: 6px;
}

.score .bold {
    font-family: "Liberation Serif", "DejaVu Sans", serif;
    font-size: 7px;
    font-weight: 700;
}

.score .acc {
    font-family: "DejaVu Sans", sans-serif;
    font-size: 10px;
    font-weight: 700;
}

.score .time {
    font-family: "Liberation Serif", serif;
    font-size: 9px;
    font-weight: 700;
}

.score .num,
.score .small {
    font-size: 4px;
    fill: #777;
}

.score .fret {
    paint-order: stroke;
    stroke: #f4f4f4;
    stroke-width: 2px;
}

.score .tab-letter {
    font-size: 7px;
}

.line {
    fill: none;
    stroke: #b4b4b4;
    stroke-width: 0.6px;
}

.bar {
    stroke: #444;
    stroke-width: 0.8px;
}

.bar.wide {
    stroke: #888;
    stroke-width: 2px;
}

.stroke {
    fill: none;
    stroke: #111;
    stroke-width: 1px;
}

.stroke.heavy {
    stroke-width: 1.4px;
}

.stroke.thin {
    stroke-width: 0.6px;
}

.stem {
    fill: none;
    stroke: #111;
    stroke-width: 0.7px;
}

.beam {
    fill: none;
    stroke: #111;
    stroke-width: 1.5px;
}

/* Tracks */
.tracks {
    flex: none;
    display: flex;
    height: 135px;
    color: #e6e6ea;
    background: #1b1c24;
}

.panel {
    flex: 0 0 250px;
    display: flex;
    flex-direction: column;
}

.track {
    display: grid;
    grid-template-columns: 2px 14px 9px 1fr 14px 14px 9px 64px 10px 17px 8px 20px;
    align-items: center;
    justify-items: center;
    white-space: nowrap;
}

.track > :nth-child(4) {
    justify-self: start;
}

.head {
    height: 11px;
}

.master {
    height: 10px;
}

.plus {
    font-size: 9px;
    font-weight: 400;
}

.track > .list-title {
    display: flex;
    align-items: center;
    justify-self: stretch;
}

.list-title svg {
    width: 7px;
    height: 7px;
    margin: 0 8px 0 auto;
}

.vol-title {
    justify-self: end;
    padding-right: 20px;
}

.track-list {
    flex: 1;
    display: grid;
    grid-template-rows: repeat(10, 1fr);
    background: #292a33;
}

.track-list .track:first-child {
    background: #3c3e4b;
}

.color {
    align-self: stretch;
    justify-self: stretch;
    background: #ff0000;
}

.color.yellow {
    background: #ffff00;
}

.color.blue {
    background: #0000ff;
}

.track .inst {
    width: 7px;
    height: 8px;
    color: #fff;
}

.track .no {
    justify-self: end;
    padding-right: 1px;
    color: #777c8c;
}

.track .ic {
    width: 8px;
    height: 7px;
    color: #516573;
}

.track .ic.white {
    color: #fff;
}

.track .ic.pan,
.track .ic.pan-end {
    width: 9px;
    height: 9px;
    color: #8f9bb0;
}

.track .auto {
    color: #121318;
    font-size: 7px;
    font-weight: 700;
}

.master .pan {
    grid-column: 5 / 8;
    justify-self: center;
    margin-left: 17px;
}

.track input {
    appearance: none;
    width: 58px;
    height: 8px;
    background: linear-gradient(#121318, #121318) center / 100% 4px no-repeat;
}

.track input::-webkit-slider-thumb {
    appearance: none;
    width: 3px;
    height: 8px;
    background: #e2e2e2;
}

.timeline {
    flex: 1;
    min-width: 0;
    overflow: hidden;
    display: flex;
    flex-direction: column;
}

.bars {
    display: grid;
    grid-template-columns: repeat(68, 1fr);
    margin-right: -4px;
}

.ruler {
    height: 11px;
    line-height: 11px;
    text-align: center;
}

.ruler span {
    display: flex;
    justify-content: center;
}

.lanes {
    flex: 1;
    display: grid;
    grid-template-rows: repeat(10, 1fr);
}

.bars.lane {
    background: #3e3f4b;
}

.lane i {
    border-right: 1px solid #30313b;
    border-bottom: 1px solid #30313b;
}

.lane .red {
    background: #ff0000;
    border-color: #a80008;
}

.lane .yellow {
    background: #ffff00;
    border-color: #a8a800;
}

.lane .blue {
    background: #0000ff;
    border-color: #0000c0;
}

.lane .cursor {
    border: 2px solid #a80008;
    background: #111;
}

.markers {
    height: 9px;
    font-size: 5px;
    line-height: 7px;
}

.markers span {
    grid-row: 1;
    padding-left: 3px;
    white-space: nowrap;
}

.markers span::before {
    content: "";
    display: inline-block;
    width: 4px;
    height: 4px;
    margin-right: 4px;
    background: #fff;
}

.scroll {
    width: 14%;
    height: 2px;
    background: #8292b0;
}

/* TotalMix window */
.mixer {
    position: absolute;
    left: 368px;
    top: 93px;
    width: 451px;
    height: 384px;
    display: flex;
    flex-direction: column;
    border-radius: 5px;
    overflow: hidden;
    color: #a9b4ba;
    background: #1c2326;
    font-family: "Liberation Sans", sans-serif;
    font-size: 5px;
    line-height: 6px;
    box-shadow: 0 4px 16px rgba(0, 0, 0, 0.5);
}

.mixer-title {
    height: 12px;
    background: #e9e2ea;
}

.mixer-body {
    flex: 1;
    min-height: 0;
    display: flex;
}

.mixer-main {
    flex: 1;
    display: flex;
    flex-direction: column;
    justify-content: flex-end;
    border-left: 1px solid #1e8a2c;
}

.channels {
    display: flex;
    height: 70px;
}

.channel {
    flex: 1;
    display: grid;
    grid-template-columns: 9px 9px 1fr;
    grid-template-rows: 1fr 10px;
    border-right: 1px solid #0f1315;
    background: #1f2629;
}

.channel.bright {
    background: #465059;
}

.channel.edge {
    border-left: 1px solid #54708a;
}

.meter {
    width: 4px;
    margin: 0 2px 4px;
    background: repeating-linear-gradient(#0c0f10 0 2px, #242b2e 2px 3px);
}

.fader {
    width: 3px;
    margin: 0 3px 4px;
    border-top: 7px solid #8d979b;
    background: #0c0f10;
}

.fader.low {
    border-top-width: 0;
    background: linear-gradient(#0c0f10 21px, #9ba5aa 21px 30px, #0c0f10 30px);
}

.channel svg {
    width: 7px;
    height: 8px;
    align-self: center;
    color: #5a6468;
}

.channel output {
    grid-column: 1 / 3;
    padding-left: 4px;
    color: #e8a020;
    font-weight: 700;
}

.channel .cue {
    width: 5px;
    height: 4px;
    margin-top: 1px;
    border: 1px solid #4b5559;
    border-radius: 2px;
}

.mixer-foot {
    display: flex;
    align-items: center;
    gap: 4px;
    height: 7px;
    padding: 0 2px;
    font-size: 4px;
}

.mixer-foot i {
    height: 2px;
    border-radius: 1px;
    background: #7a8286;
}

.mixer-foot .foot-blue {
    width: 36px;
    background: #2e4852;
}

.mixer-foot .foot-bar {
    flex: 1;
    margin-left: 8px;
}

.mixer-foot .leds {
    width: 23px;
    background: repeating-linear-gradient(90deg, #1f9a40 0 3px, transparent 3px 6px);
}

.mixer-foot b {
    width: 46px;
    text-align: center;
    color: #b4c4d0;
    background: #41525f;
}

.mixer-foot .foot-short {
    width: 4px;
}

.mixer-side {
    flex: 0 0 29px;
    display: flex;
    flex-direction: column;
    align-items: flex-start;
    justify-content: flex-end;
    gap: 4px;
    padding: 0 0 17px 3px;
    background: #20282b;
}

.mixer button {
    height: 5px;
    min-width: 18px;
    border-radius: 3px;
    background: #3d474b;
    font-size: 4px;
    line-height: 5px;
}

.mixer .mixer-side button {
    min-width: 21px;
}

.mixer .mixer-side .dark {
    color: #4d5659;
    background: #161b1d;
}

.mixer-side .assign {
    margin-top: 24px;
}

.mixer-panel {
    flex: 0 0 40px;
    display: flex;
    flex-direction: column;
    gap: 3px;
    padding: 3px 0;
    background: #20292d;
}

.device {
    height: 7px;
    border-radius: 4px;
    text-align: center;
    background: #3a4348;
    white-space: nowrap;
}

.fx {
    display: flex;
    gap: 4px;
    height: 17px;
    padding: 1px;
}

.fx b {
    width: 15px;
    height: 15px;
    border: 1px solid #465055;
    border-radius: 50%;
    text-align: center;
    line-height: 13px;
    background: #14191b;
}

.fx i {
    flex: 1;
    border: 1px solid #3a4348;
    background: #12181a;
}

.msf {
    display: flex;
    height: 5px;
    margin: 0 1px;
    border-radius: 3px;
    overflow: hidden;
    background: #11171a;
    font-size: 4px;
    line-height: 5px;
}

.msf span {
    flex: 1;
    text-align: center;
}

.msf .m {
    background: #1c4ac0;
}

.msf .s {
    background: #cf7a18;
}

.mixer-panel h3 {
    flex: none;
    height: 6px;
    text-align: center;
    font-weight: 400;
    line-height: 6px;
    color: #9fc0d2;
    background: #2d5166;
}

.view {
    display: flex;
    flex-direction: column;
    justify-content: space-between;
    height: 59px;
    padding: 2px;
    margin: 0 1px;
    border-radius: 2px;
    color: #c8fbff;
    background: #08c8e4;
    font-size: 4px;
    line-height: 5px;
}

.view b {
    text-align: center;
    color: #065260;
    white-space: nowrap;
}

.view div {
    display: flex;
    gap: 2px;
}

.view span {
    flex: 1;
    height: 8px;
    border: 1px solid #5be4f4;
    border-radius: 2px;
    text-align: center;
    font-size: 3px;
    font-weight: 700;
    line-height: 6px;
    white-space: nowrap;
}

.view .lit {
    color: #0ab4d0;
    background: #c0f6fc;
}

.mixer-panel ul {
    display: grid;
    grid-auto-rows: 1fr;
}

.snapshots {
    height: 46px;
}

.layouts {
    height: 35px;
}

.mixer-panel li {
    display: flex;
    gap: 3px;
    padding-left: 2px;
}

.mixer-panel li::before {
    content: "";
    width: 8px;
    height: 4px;
    margin-top: 1px;
    background: #2c363b;
}

.pair {
    display: flex;
    justify-content: center;
    gap: 1px;
}

.groups {
    display: grid;
    grid-template-columns: repeat(3, 1fr);
    height: 34px;
    text-align: center;
    color: #56646b;
    background: #182125;
    font-size: 4px;
}

.groups b {
    color: #88a6b5;
    background: #12323f;
    font-weight: 400;
}

.groups i {
    border: 1px solid #222d32;
    font-style: normal;
    line-height: 5px;
}

/* Open dialog */
.dialog {
    position: absolute;
    left: 180px;
    top: 53px;
    width: 586px;
    height: 356px;
    display: flex;
    border-radius: 5px;
    overflow: hidden;
    background: #fff;
    box-shadow: 0 4px 16px rgba(0, 0, 0, 0.5);
}

.sidebar {
    flex: 0 0 77px;
    padding: 6px 5px 0 4px;
    color: #3e3b42;
    background: #e6e0e8;
}

.sidebar h2 {
    padding-left: 3px;
    color: #a19ba4;
    font-size: 5px;
    font-weight: 600;
}

.sidebar a + h2 {
    margin-top: 5px;
}

.sidebar a {
    display: flex;
    align-items: center;
    gap: 3px;
    height: 13px;
    padding: 0 4px 0 3px;
    border-radius: 2px;
    white-space: nowrap;
}

.sidebar a.selected {
    background: #cbc5ce;
}

.sidebar svg {
    width: 8px;
    height: 8px;
    color: #7b7780;
}

.sidebar .blue svg {
    color: #2f7de0;
}

.sidebar .teal svg {
    color: #2fa9bd;
}

.sidebar .eject {
    width: 6px;
    height: 6px;
    margin-left: auto;
}

.browser {
    flex: 1;
    min-width: 0;
    display: flex;
    flex-direction: column;
}

.browser-bar {
    display: flex;
    align-items: center;
    height: 27px;
    padding: 0 9px;
    color: #555;
    border-bottom: 1px solid #f0f0f0;
}

.browser-bar button {
    display: flex;
    align-items: center;
    justify-content: center;
    gap: 4px;
    height: 10px;
    border: 1px solid #efefef;
    border-radius: 3px;
}

.nav-btn {
    width: 11px;
    color: #bbb;
}

.browser-bar .view-btn {
    width: 21px;
    margin-left: 4px;
}

.browser-bar svg {
    width: 7px;
    height: 7px;
}

.browser-bar .arrow {
    width: 5px;
}

.place {
    display: flex;
    align-items: center;
    gap: 2px;
    width: 95px;
    height: 10px;
    margin: 0 auto;
    padding: 0 1px 0 3px;
    border-radius: 3px;
    box-shadow: 0 0 1px rgba(0, 0, 0, 0.25);
}

.place select {
    flex: 1;
    appearance: none;
    color: #333;
}

.stepper {
    display: flex;
    align-items: center;
    justify-content: center;
    width: 8px;
    height: 8px;
    border-radius: 2px;
    color: #fff;
    background: #3f86f0;
}

.stepper svg {
    width: 4px;
    height: 6px;
}

.search {
    display: flex;
    align-items: center;
    gap: 3px;
    width: 70px;
    height: 10px;
    padding-left: 3px;
    border-radius: 3px;
    box-shadow: 0 0 1px rgba(0, 0, 0, 0.25);
}

.search input {
    width: 100%;
    min-width: 0;
}

.search input::placeholder {
    color: #bdbdbd;
}

.listing {
    flex: 1;
    min-height: 0;
    overflow: hidden;
    padding: 0 5px;
}

table {
    width: 100%;
    table-layout: fixed;
    border-collapse: collapse;
}

th {
    height: 16px;
    padding: 0;
    text-align: left;
    font-weight: 400;
    color: #777;
}

th.name {
    width: 302px;
    padding-left: 17px;
    font-weight: 600;
    color: #333;
}

th.caret {
    width: 20px;
    padding-left: 8px;
}

th.size-head {
    width: 43px;
}

th.type {
    width: 53px;
}

td {
    height: 9px;
    padding: 0;
    color: #858585;
    line-height: 9px;
    white-space: nowrap;
}

tbody tr:nth-child(even) td {
    background: #f4f5f5;
}

td:first-child {
    border-radius: 2px 0 0 2px;
    padding-left: 2px;
    color: #333;
}

td svg {
    width: 7px;
    height: 7px;
    margin-right: 3px;
    vertical-align: -1px;
}

td svg.chev {
    width: 3px;
    height: 5px;
    margin-right: 2px;
    vertical-align: 0;
    color: #777;
}

td.size {
    padding-right: 5px;
    text-align: right;
}

td:last-child {
    border-radius: 0 2px 2px 0;
}

.browser-foot {
    display: flex;
    align-items: center;
    justify-content: flex-end;
    gap: 4px;
    height: 28px;
    padding-right: 9px;
    border-top: 1px solid #ececec;
}

.browser-foot button {
    width: 34px;
    height: 10px;
    border-radius: 3px;
    background: #fff;
    box-shadow: 0 0 2px rgba(0, 0, 0, 0.35);
}

.browser-foot button:disabled {
    color: #bdbdbd;
    background: #f6f6f6;
    box-shadow: none;
}

/* Capture bar */
.capture {
    position: absolute;
    left: 294px;
    top: 493px;
    width: 235px;
    height: 22px;
    display: flex;
    align-items: center;
    border-radius: 4px;
    overflow: hidden;
    color: #26262c;
    background: rgba(200, 199, 208, 0.8);
    backdrop-filter: blur(5px);
}

.capture button {
    display: flex;
    align-items: center;
    justify-content: center;
    width: 22px;
    height: 22px;
}

.capture svg {
    width: 13px;
    height: 12px;
}

.capture .ln {
    stroke-width: 2px;
}

.dash {
    stroke-dasharray: 3 2;
}

.capture .cap-close {
    width: 14px;
}

.capture .cap-close svg {
    width: 6px;
    height: 6px;
}

.cap-sep {
    width: 1px;
    height: 16px;
    margin: 0 5px 0 1px;
    background: #96969f;
}

.capture .picked {
    width: 18px;
    height: 18px;
    border-radius: 3px;
    background: #9495a0;
}

.capture .cap-options {
    width: 39px;
    gap: 1px;
    margin-left: 4px;
    font-weight: 600;
    background: rgba(120, 120, 70, 0.4);
}

.capture .cap-options svg {
    width: 5px;
    height: 5px;
}

.capture .cap-record {
    flex: 1;
    gap: 3px;
    font-weight: 600;
    color: #807f76;
}

.cap-record small {
    font-size: 6px;
    font-weight: 400;
}

/* Options menu */
.menu {
    position: absolute;
    left: 426px;
    top: 280px;
    width: 116px;
    padding: 3px 0 2px;
    border-radius: 4px;
    color: #1e1e22;
    background: linear-gradient(#dbd9dd, #cbcacf 45%, #b9b9be 68%, #bdb8dc 85%, #b6aeef);
    box-shadow: 0 2px 8px rgba(0, 0, 0, 0.35);
}

.menu h2,
.menu button {
    display: block;
    width: 100%;
    height: 10px;
    padding-left: 11px;
    text-align: left;
    line-height: 10px;
    font-weight: 500;
    white-space: nowrap;
}

.menu h2 {
    color: #94939a;
}

.menu button.checked {
    padding-left: 4px;
}

.menu button.checked::before {
    content: "✓";
    display: inline-block;
    width: 7px;
    font-weight: 700;
}

.menu hr {
    height: 1px;
    margin: 2px 11px;
    border: 0;
    background: #b0afb6;
}

/* Dock */
.dock {
    position: absolute;
    left: 50%;
    bottom: 1px;
    transform: translateX(-50%);
    display: flex;
    align-items: center;
    height: 37px;
    padding: 0 2px;
    border-radius: 9px;
    background: linear-gradient(90deg, #5d4b99, #6b4fb0 25%, #7a55cc 45%, #a553f2 65%, #a853f5 85%, #9448e0);
}

.dock a {
    display: flex;
    align-items: center;
    justify-content: center;
    width: 31px;
    height: 34px;
    padding-bottom: 3px;
    position: relative;
}

.dock svg {
    width: 25px;
    height: 25px;
}

.dock .big svg {
    width: 28px;
    height: 28px;
}

.dock .full svg {
    width: 30px;
    height: 29px;
}

.dock .running::after {
    content: "";
    position: absolute;
    left: 50%;
    bottom: -1px;
    width: 2px;
    height: 2px;
    border-radius: 50%;
    background: #150a30;
}

.dock-sep {
    width: 1px;
    height: 28px;
    margin: 0 6px;
    background: #7a3fc0;
}
```
FILE: script.js
```js
// Song tracks: name, instrument icon, colour, volume
const tracks = [
    ['Lead Vocals', 'sax', 'red', 62],
    ['Backing Vocals', 'sax', 'red', 58],
    ['Electric Lead Guitar', 'guitar', 'red', 49],
    ['Acoustic Lead Guitar', 'guitar', 'red', 49],
    ['Acoustic Rhythm Guitar', 'guitar', 'red', 47],
    ['Electric Bass Guitar', 'bass', 'yellow', 57],
    ['Drums and Percussion', 'drum', 'blue', 54],
    ['Piano', 'keys', 'red', 62],
    ['Cello', 'cello', 'yellow', 58],
    ['Saws', 'cello', 'red', 49]
];

// Filled bars of each track, as [first, last] pairs
const filled = [
    [[8, 67]],
    [[66, 66]],
    [[44, 57]],
    [[44, 57]],
    [[0, 67]],
    [[16, 39], [41, 67]],
    [[16, 39], [41, 67]],
    [],
    [[16, 39], [42, 67]],
    [[32, 39], [58, 67]]
];

const sections = [
    [1, 'Intro'], [9, 'Verse 1'], [17, 'Verse 2'], [25, 'Bridge 1'], [33, 'Chorus 1'],
    [43, 'Verse 3'], [51, 'Bridge 2'], [59, 'Chorus 2'], [67, 'Chorus 3']
];

const files = [
    ['__MACOSX', '20 juil. 2022 à 16:47'],
    ['Avid', '23 juil. 2022 à 17:32'],
    ['BIAS_FX', '22 juil. 2022 à 10:31'],
    ['BIAS_Pedal', '22 juil. 2022 à 11:06'],
    ['Blackmagic Design', '20 juil. 2022 à 09:18'],
    ['Downloads', '1 sept. 2022 à 17:36'],
    ['Free Loops By Output v2', '20 juil. 2022 à 16:47'],
    ['Kemper Amps', '19 juil. 2022 à 16:22'],
    ['Max 8', '22 juil. 2022 à 11:35'],
    ['Native Instruments', '21 juil. 2022 à 12:22'],
    ['PositiveGrid', '22 juil. 2022 à 10:51'],
    ['Pro Tools', '19 juil. 2022 à 16:11'],
    ['Signal', '20 juil. 2022 à 16:42'],
    ['Steven slate trigger', '20 juil. 2022 à 15:58'],
    ['SUBSTANCE', '20 juil. 2022 à 16:46']
];

function icon(name, cls) {
    return `<svg class="${cls}"><use href="#${name}"/></svg>`;
}

// Track list
document.getElementById('trackList').innerHTML = tracks.map(([name, inst, color, vol], i) => `
    <div class="track">
        <span class="color ${color}"></span>
        ${icon(inst, 'inst')}
        <span class="no">${i + 1}.</span>
        <span>${name}</span>
        ${icon('eye', i === 0 ? 'ic white' : 'ic')}
        ${icon('mute', 'ic')}
        ${icon('phones', 'ic')}
        <input type="range" value="${vol}" aria-label="Volume ${name}">
        <span class="auto">A</span>
        ${icon('knob', 'ic pan-end')}
        <span class="auto">A</span>
        ${icon('faders', 'ic')}
    </div>`).join('');

// Timeline
let ruler = '';
for (let bar = 1; bar <= 68; bar++) {
    ruler += `<span>${bar % 4 === 0 ? bar : ''}</span>`;
}
document.getElementById('ruler').innerHTML = ruler;

document.getElementById('lanes').innerHTML = tracks.map(([, , color], row) => {
    let cells = '';
    for (let bar = 0; bar < 68; bar++) {
        const on = filled[row].some(([a, b]) => bar >= a && bar <= b);
        const cursor = row === 0 && bar === 8;
        cells += `<i class="${cursor ? 'cursor' : on ? color : ''}"></i>`;
    }
    return `<div class="bars lane">${cells}</div>`;
}).join('');

document.getElementById('markers').innerHTML = sections.map(([bar, name]) =>
    `<span style="grid-column: ${bar} / span 2">${name}</span>`).join('');

// Staves of the left and the right page column
document.getElementById('staves').innerHTML =
    [162, 239, 314, 392].map(y =>
        `<svg x="114" y="${y}" width="246" height="46" overflow="hidden"><use href="#staff"/></svg><use href="#opening" x="114" y="${y}"/>`).join('') +
    [103, 178, 260, 333].map(y =>
        `<svg x="700" y="${y}" width="206" height="46"><use href="#staff"/></svg>
         <path class="bar${y === 178 || y === 333 ? ' wide' : ''}" d="M905.5 ${y}v12M905.5 ${y + 23}v22.5"/>`).join('');

// Mixer channels
const levels = ['0.4', '0.0', '0.0', '0.0', '0.0', '0.0', '0.0', '0.0', '0.0', '0.0', '0.0', '0.0', '-20.0', '0.0'];
document.getElementById('channels').innerHTML = levels.map((db, i) => `
    <div class="channel${i === 12 ? ' edge' : ''}${i === 13 ? ' bright' : ''}">
        <i class="meter"></i><i class="fader${i === 12 ? ' low' : ''}"></i>${icon('wrench', '')}
        <output>${db}</output><i class="cue"></i>
    </div>`).join('');

// File list, padded with empty rows
let rows = files.map(([name, date]) => `
    <tr>
        <td colspan="2"><svg class="chev" viewBox="0 0 6 10"><path d="m1 1 4 4-4 4" class="ln"/></svg>${icon('bluefolder', '')}${name}</td>
        <td class="size">--</td><td>Dossier</td><td>${date}</td>
    </tr>`).join('');
for (let i = 0; i < 17; i++) {
    rows += '<tr><td colspan="2"></td><td></td><td></td><td></td></tr>';
}
document.getElementById('files').innerHTML = rows;
```
